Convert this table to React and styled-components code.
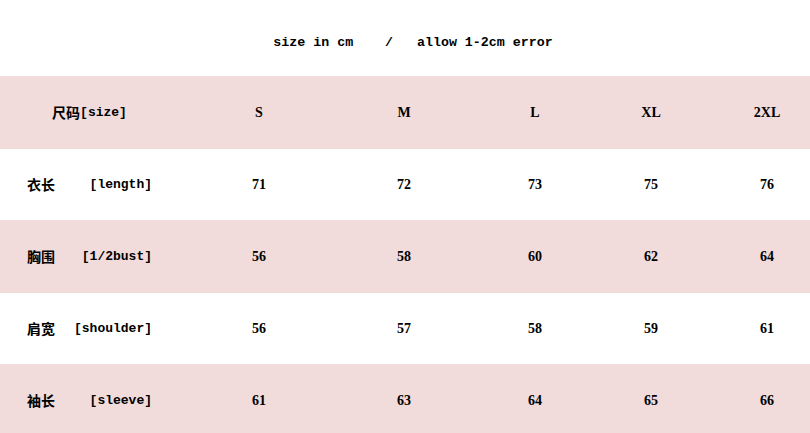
import React from "react";
import styled, { createGlobalStyle } from "styled-components";

const GlobalStyle = createGlobalStyle`
    html, body {
        margin: 0;
        padding: 0;
        background: #ffffff;
        overflow: hidden;
    }
`;

const Page = styled.div`
    width: 810px;
    height: 433px;
    overflow: hidden;
    background: #ffffff;
    color: #000000;
    font-family: "Liberation Mono", "Noto Sans CJK SC", monospace;
    font-weight: bold;
    font-size: 13px;
`;

const Caption = styled.div`
    height: 76px;
    display: flex;
    align-items: center;
    justify-content: center;
    padding: 9px 0 0 16px;
    box-sizing: border-box;
    white-space: pre;
    font-size: 13.3px;
`;

const Row = styled.div`
    display: grid;
    grid-template-columns: 187px 144px 146px 116px 116px 101px;
    align-items: center;
    height: ${({tall}) => (tall ? "73px" : "71px")};
    background: ${({shaded}) => (shaded ? "#f1dbdb" : "#ffffff")};
`;

const LabelCell = styled.div`
    display: flex;
    align-items: center;
    justify-content: ${({centered}) => (centered ? "center" : "space-between")};
    padding: 0 35px 0 27px;
`;

const Zh = styled.span`
    font-family: "Noto Sans CJK SC", sans-serif;
    font-size: 14px;
    font-weight: bold;
    position: relative;
    top: -1px;
`;

const En = styled.span`
    font-family: "Liberation Mono", monospace;
    font-size: 13px;
`;

const ValueCell = styled.div`
    text-align: center;
    font-family: "Liberation Serif", serif;
    font-size: 14px;
    padding-left: ${({last}) => (last ? "15px" : "0")};
`;

const sizes = ["S", "M", "L", "XL", "2XL"];

const rows = [
    {zh: "衣长", en: "[length]", values: [71, 72, 73, 75, 76]},
    {zh: "胸围", en: "[1/2bust]", values: [56, 58, 60, 62, 64]},
    {zh: "肩宽", en: "[shoulder]", values: [56, 57, 58, 59, 61]},
    {zh: "袖长", en: "[sleeve]", values: [61, 63, 64, 65, 66]},
];

export default function App() {
    return (
        <Page>
            <GlobalStyle />
            <Caption>{"size in cm    /   allow 1-2cm error"}</Caption>
            <Row shaded tall>
                <LabelCell centered>
                    <Zh>尺码</Zh>
                    <En>[size]</En>
                </LabelCell>
                {sizes.map((size, i) => (
                    <ValueCell key={size} last={i === sizes.length - 1}>
                        {size}
                    </ValueCell>
                ))}
            </Row>
            {rows.map((row, r) => (
                <Row key={row.zh} shaded={r % 2 === 1} tall={r % 2 === 1}>
                    <LabelCell>
                        <Zh>{row.zh}</Zh>
                        <En>{row.en}</En>
                    </LabelCell>
                    {row.values.map((value, i) => (
                        <ValueCell key={i} last={i === row.values.length - 1}>
                            {value}
                        </ValueCell>
                    ))}
                </Row>
            ))}
        </Page>
    );
}
